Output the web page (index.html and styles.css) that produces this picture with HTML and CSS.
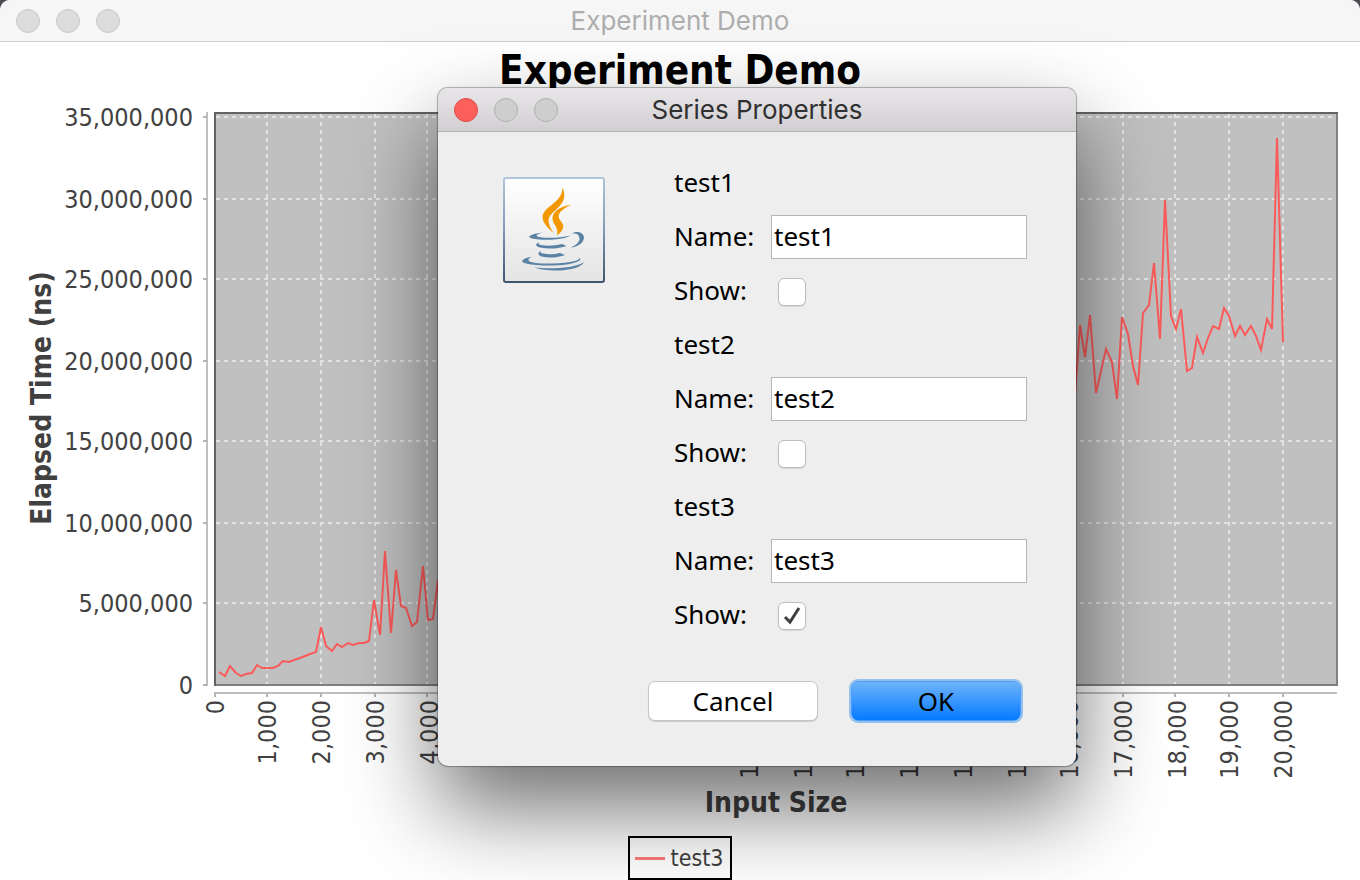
FILE: index.html
```html
<!DOCTYPE html>
<html lang="en">
<head>
<meta charset="utf-8">
<title>Experiment Demo</title>
<link rel="stylesheet" href="styles.css">
</head>
<body>
<main class="window">
  <header class="titlebar">
    <div class="lights"><span class="light"></span><span class="light"></span><span class="light"></span></div>
    <span class="titlebar-text">Experiment Demo</span>
  </header>
  <section class="chart">
    <h1 class="chart-title">Experiment Demo</h1>
    <svg class="plot" viewBox="0 92 1360 736" role="img" aria-label="Elapsed time by input size">
      <rect x="215" y="113" width="1122" height="572" fill="#c0c0c0"/>
      <path class="grid" d="M216 117H1336M216 199H1336M216 279H1336M216 361H1336M216 441H1336M216 523H1336M216 603H1336"/>
      <path class="grid" d="M267 114V684M321 114V684M375 114V684M427 114V684M481 114V684M535 114V684M589 114V684M641 114V684M695 114V684M749 114V684M803 114V684M855 114V684M909 114V684M963 114V684M1017 114V684M1069 114V684M1123 114V684M1175 114V684M1229 114V684M1283 114V684"/>
      <path d="M1337 112V686M214 685H1338" stroke="#808080" stroke-width="2"/>
      <path d="M215 686V113H1338" fill="none" stroke="#626262" stroke-width="2"/>
      <path class="axis" d="M207 112V686M214 693H1337"/>
      <path class="tick" d="M203 117H207M203 199H207M203 279H207M203 361H207M203 441H207M203 523H207M203 603H207M203 685H207"/>
      <path class="tick" d="M215 693V697M267 693V697M321 693V697M375 693V697M427 693V697M1123 693V697M1175 693V697M1229 693V697M1283 693V697"/>
      <polyline class="series" points="219,672 225,676 230,666 236,673 241,676 246,674 252,673 257,665 262,668 268,668 273,668 278,666 283,661 289,662 294,660 300,658 305,656 310,654 316,652 321,627 326,646 332,651 337,644 342,647 348,643 353,645 359,643 364,643 369,641 374,600 380,635 385,551 391,633 396,570 401,606 406,608 412,626 417,622 423,566 428,620 433,619 438,580"/>
      <polyline class="series" points="1074,410 1080,325 1085,357 1090,315 1096,393 1101,371 1106,349 1112,362 1117,399 1122,317 1128,334 1133,366 1138,385 1143,313 1149,305 1154,263 1160,339 1165,200 1171,316 1176,329 1181,309 1187,371 1192,368 1197,337 1203,353 1208,338 1213,326 1219,329 1224,308 1229,316 1235,336 1240,326 1245,335 1251,326 1256,336 1261,350 1267,319 1272,329 1277,138 1283,342"/>
      <g class="labels">
        <text x="193" y="126">35,000,000</text><text x="193" y="208">30,000,000</text>
        <text x="193" y="288">25,000,000</text><text x="193" y="370">20,000,000</text>
        <text x="193" y="450">15,000,000</text><text x="193" y="532">10,000,000</text>
        <text x="193" y="612">5,000,000</text><text x="193" y="694">0</text>
      </g>
      <g class="labels">
        <text transform="translate(224 700) rotate(-90)">0</text>
        <text transform="translate(276 700) rotate(-90)">1,000</text>
        <text transform="translate(330 700) rotate(-90)">2,000</text>
        <text transform="translate(384 700) rotate(-90)">3,000</text>
        <text transform="translate(438 700) rotate(-90)">4,000</text>
        <text transform="translate(758 700) rotate(-90)">10,000</text>
        <text transform="translate(812 700) rotate(-90)">11,000</text>
        <text transform="translate(864 700) rotate(-90)">12,000</text>
        <text transform="translate(918 700) rotate(-90)">13,000</text>
        <text transform="translate(972 700) rotate(-90)">14,000</text>
        <text transform="translate(1026 700) rotate(-90)">15,000</text>
        <text transform="translate(1078 700) rotate(-90)">16,000</text>
        <text transform="translate(1132 700) rotate(-90)">17,000</text>
        <text transform="translate(1186 700) rotate(-90)">18,000</text>
        <text transform="translate(1238 700) rotate(-90)">19,000</text>
        <text transform="translate(1292 700) rotate(-90)">20,000</text>
      </g>
      <text class="axis-title" transform="translate(51 398) rotate(-90)">Elapsed Time (ns)</text>
      <text class="axis-title" x="776" y="812">Input Size</text>
    </svg>
    <div class="legend"><span class="legend-line"></span>test3</div>
  </section>

  <div class="dialog" role="dialog" aria-labelledby="dialog-title">
    <header class="dialog-bar">
      <div class="lights"><button class="light light-close" aria-label="Close"></button><span class="light light-off"></span><span class="light light-off"></span></div>
      <h2 class="dialog-title" id="dialog-title">Series Properties</h2>
    </header>
    <form class="dialog-form">
      <div class="dialog-content">
        <svg class="java" viewBox="0 0 103 107" aria-hidden="true">
          <defs>
            <linearGradient id="face" x1="0" y1="0" x2="0" y2="1"><stop offset="0" stop-color="#fff"/><stop offset="1" stop-color="#e4e4e4"/></linearGradient>
            <linearGradient id="edge" x1="0" y1="0" x2="0" y2="1"><stop offset="0" stop-color="#b0c4da"/><stop offset="0.5" stop-color="#7f9ab5"/><stop offset="1" stop-color="#3c566f"/></linearGradient>
          </defs>
          <rect x="2" y="2" width="100" height="104" rx="2" fill="url(#face)" stroke="url(#edge)" stroke-width="2"/>
          <g fill="#f39800">
            <path d="M60.500 11.500C60.500 20 55 25 47 31C37 39 39 46 51.500 57C46 48 44.500 43 50 37.500C58 30 66 24 60.500 11.500Z"/>
            <path d="M69.500 28.500C57 31 50 36 50.500 43C51 49 57 51 55 59.500C62 54 62.500 50 59.500 46C54 40 56 35 69.500 28.500Z"/>
          </g>
          <g fill="#5a82a4">
            <path d="M41 56.500C28 58 24 61 30 62.500C42 65 60 64 69 59.500C58 62 44 62.500 37 61C33 60 34 58.500 41 56.500Z"/>
            <path d="M70 57.500C76 54 82 57 82 62C81 68 75 71 68.500 71.500C75 69 78 65 77.500 62C77 58 74 57 70 57.500Z"/>
            <path d="M37.500 66C33 68 33 70 38 71.500C47 73.500 58 72.500 64.500 70L60 68C52 70 44 70 39 69C36 68 36 67 37.500 66Z"/>
            <path d="M39 75C35.500 76.500 35.500 79 39.500 80.500C47 82.500 57 81.500 63 79L58 77C52 78.500 46 78.500 41 77.500C38.500 77 38 76 39 75Z"/>
            <path d="M31 80.500C20 82 17 86 24 87.500C40 91 68 90 77 85C79 83.500 78 82.500 77 81.500C78 84 74 85 68 86C54 88 36 88 29 86C25 84.500 26 82 31 80.500Z"/>
            <path d="M32 91.500C46 93 72 93 82 86C78 95 48 97 32 91.500Z"/>
          </g>
        </svg>
        <div class="fields">
          <span class="series-name">test1</span>
          <label for="name1">Name:</label><input class="text" id="name1" type="text" value="test1">
          <label for="show1">Show:</label><input class="check" id="show1" type="checkbox">
          <span class="series-name">test2</span>
          <label for="name2">Name:</label><input class="text" id="name2" type="text" value="test2">
          <label for="show2">Show:</label><input class="check" id="show2" type="checkbox">
          <span class="series-name">test3</span>
          <label for="name3">Name:</label><input class="text" id="name3" type="text" value="test3">
          <label for="show3">Show:</label><input class="check" id="show3" type="checkbox" checked>
        </div>
      </div>
      <div class="actions">
        <button class="btn" type="button">Cancel</button>
        <button class="btn btn-primary" type="button">OK</button>
      </div>
    </form>
  </div>
</main>
</body>
</html>
```
FILE: styles.css
```css
* { box-sizing: border-box; }
body { margin: 0; background: #4c4c52; overflow: hidden; }
.window {
  position: relative;
  min-height: 100vh;
  overflow: hidden;
  background: #fff;
  border-radius: 10px 10px 0 0;
}
.titlebar, .dialog-bar {
  display: grid;
  grid-template-columns: 1fr auto 1fr;
  align-items: center;
  padding: 0 16px;
  font-family: Inter, sans-serif;
  font-size: 26px;
}
.titlebar {
  height: 42px;
  background: #f6f6f6;
  border-bottom: 1px solid #cfcfcf;
  color: #adadad;
}
.lights { display: flex; gap: 16px; }
.light {
  width: 24px;
  height: 24px;
  padding: 0;
  border: 1px solid #c8c8c8;
  border-radius: 50%;
  background: #dcdcdc;
}
.light-off { background: #cecece; border-color: #b0b0b0; }
.light-close { background: #fc605c; border-color: #e04844; }

.chart {
  display: flex;
  flex-direction: column;
  align-items: center;
  font-family: "DejaVu Sans Condensed", "DejaVu Sans", sans-serif;
}
.chart-title { margin: 0; height: 50px; line-height: 56px; font-size: 40px; color: #000; }
.plot { display: block; width: 100%; }
.grid { fill: none; stroke: #e2e2e2; stroke-width: 2; stroke-dasharray: 4 4; }
.axis { fill: none; stroke: #bfbfbf; stroke-width: 2; }
.tick { fill: none; stroke: #b4b4b4; stroke-width: 2; }
.series { fill: none; stroke: #fb5a5a; stroke-width: 2; }
.labels { font-size: 25px; fill: #424242; text-anchor: end; }
.axis-title { font-size: 28px; font-weight: bold; fill: #404040; text-anchor: middle; }
.legend {
  display: flex;
  align-items: center;
  gap: 6px;
  height: 44px;
  margin-top: 8px;
  padding: 0 7px 0 5px;
  border: 2px solid #000;
  font-size: 23px;
  color: #404040;
}
.legend-line { width: 30px; height: 3px; background: #ff7a7a; }

.dialog {
  position: absolute;
  top: 88px;
  left: 438px;
  width: 638px;
  border-radius: 10px;
  background: #eee;
  box-shadow: 0 0 1px 1px rgba(0, 0, 0, 0.3), 0 42px 88px rgba(0, 0, 0, 0.57);
  font-family: "Noto Sans", sans-serif;
  color: #000;
}
.dialog-bar {
  height: 44px;
  border-radius: 10px 10px 0 0;
  border-bottom: 1px solid #b3b1b3;
  background: linear-gradient(#e9e6e9, #d2cfd2);
}
.dialog-title { margin: 0; font-size: 26px; font-weight: 400; color: #303030; }
.dialog-form { padding: 24px 49px 45px 64px; font-size: 26px; }
.dialog-content { display: flex; justify-content: space-between; align-items: flex-start; }
.java { width: 103px; height: 107px; margin-top: 20px; }
.fields {
  display: grid;
  grid-template-columns: 97px 256px;
  grid-auto-rows: 54px;
  align-items: center;
}
.series-name { grid-column: 1 / 3; }
.series-name, .fields label { padding-bottom: 2px; }
.text {
  width: 100%;
  height: 44px;
  padding: 0 2px 2px;
  border: 1px solid #b5b5b5;
  background: #fff;
  font: inherit;
  color: inherit;
}
.check {
  appearance: none;
  width: 28px;
  height: 28px;
  margin: 2px 0 0 7px;
  border: 1px solid #bdbdbd;
  border-radius: 6px;
  background: #fff;
  box-shadow: 0 1px 1px rgba(0, 0, 0, 0.1);
}
.check:checked {
  background: #fff url("data:image/svg+xml,%3Csvg xmlns='http://www.w3.org/2000/svg' viewBox='0 0 26 26'%3E%3Cpath d='M6 14l5 5 9-14' fill='none' stroke='%23404040' stroke-width='3'/%3E%3C/svg%3E");
}
.actions { display: flex; justify-content: flex-end; align-items: center; gap: 33px; margin-top: 39px; padding-right: 6px; }
.btn {
  width: 170px;
  height: 40px;
  padding: 0;
  border: 1px solid #c6c6c6;
  border-radius: 7px;
  background: #fff;
  box-shadow: 0 1px 1px rgba(0, 0, 0, 0.15);
  font: inherit;
  line-height: 34px;
  color: #000;
}
.btn-primary {
  border-color: #4a9bf5;
  background: linear-gradient(#6db3fb, #057aff);
  box-shadow: 0 0 0 2px #94c0f0;
}
```
